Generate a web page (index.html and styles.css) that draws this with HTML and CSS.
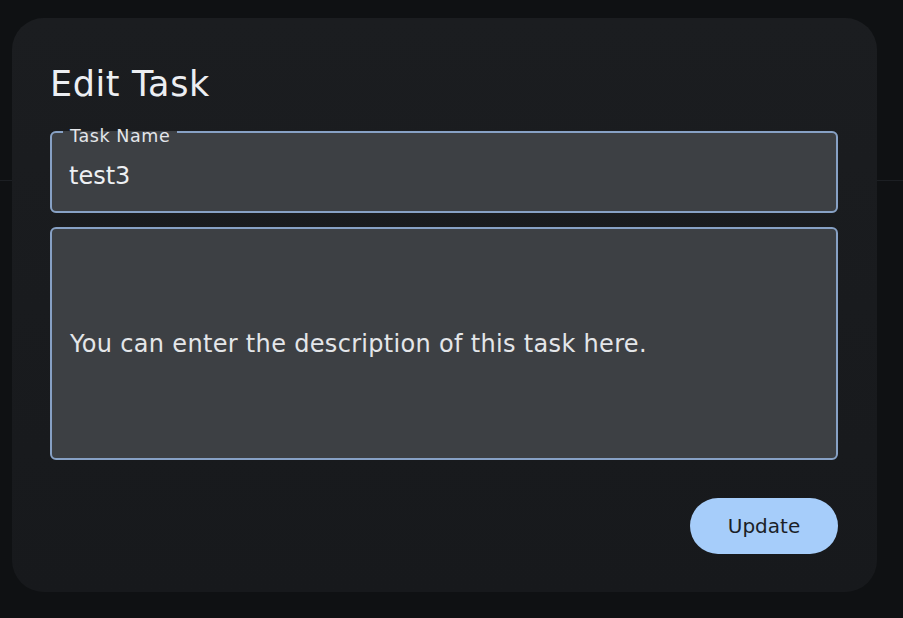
FILE: index.html
```html
<!DOCTYPE html>
<html lang="en">
<head>
<meta charset="utf-8">
<title>Edit Task</title>
<link rel="stylesheet" href="styles.css">
</head>
<body>
<div class="backdrop">
  <div class="appbar"></div>
  <div class="dialog">
    <h1 class="title">Edit Task</h1>
    <fieldset class="field name-field">
      <legend class="legend">Task Name</legend>
      <div class="value">test3</div>
    </fieldset>
    <div class="field desc-field">
      <div class="desc">You can enter the description of this task here.</div>
    </div>
    <div class="actions">
      <button class="btn">Update</button>
    </div>
  </div>
</div>
</body>
</html>
```
FILE: styles.css
```css
* { box-sizing: border-box; }
html, body {
  margin: 0;
  padding: 0;
  width: 903px;
  height: 618px;
  background: #0f1113;
  overflow: hidden;
  font-family: "DejaVu Sans", sans-serif;
}
.backdrop {
  position: relative;
  width: 903px;
  height: 618px;
  padding: 18px 26px 26px 12px;
}
.appbar {
  position: absolute;
  left: 0;
  right: 0;
  top: 180px;
  height: 1px;
  background: #1c1f23;
}
.dialog {
  position: relative;
  width: 865px;
  height: 574px;
  background: linear-gradient(180deg, #1b1d20 0%, #17191c 100%);
  border-radius: 32px;
  padding: 44px 38px 38px 38px;
  display: flex;
  flex-direction: column;
}
.title {
  margin: 0;
  font-weight: normal;
  font-size: 35px;
  line-height: 44px;
  letter-spacing: 0.6px;
  color: #eceef2;
  height: 70px;
}
.field {
  border: 2px solid #87a1c5;
  border-radius: 6px;
  background: #3d4044;
  width: 788px;
}
.name-field {
  margin: -14px 0 0 0;
  padding: 0 17px;
  height: 95px;
  min-width: 0;
}
.legend {
  padding: 8px 7px 0 7px;
  margin-left: -6px;
  font-size: 17.5px;
  line-height: 20px;
  letter-spacing: 0.6px;
  color: #e4e6ea;
}
.value {
  font-size: 24px;
  line-height: 28px;
  color: #eef0f3;
  padding-top: 16px;
}
.desc-field {
  margin-top: 14px;
  height: 233px;
  display: flex;
  align-items: center;
  padding: 0 18px;
}
.desc {
  font-size: 24px;
  letter-spacing: 0.32px;
  color: #e4e6e9;
}
.actions {
  display: flex;
  justify-content: flex-end;
  margin-top: 38px;
  width: 788px;
}
.btn {
  width: 148px;
  height: 56px;
  border: none;
  border-radius: 28px;
  background: #a6cdfa;
  color: #1b1f27;
  font-family: "DejaVu Sans", sans-serif;
  font-size: 20px;
  padding: 0;
}
```
